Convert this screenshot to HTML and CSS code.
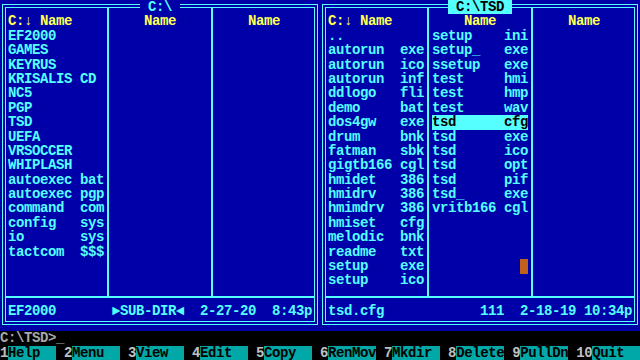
FILE: index.html
```html
<!DOCTYPE html>
<html lang="en">
<head>
  <meta charset="UTF-8">
  <title>Norton Commander - C:\TSD</title>
  <link rel="stylesheet" href="styles.css">
</head>
<body>
  <div class="screen">
    <div class="panels">

      <section class="panel">
        <div class="title"> C:\ </div>
        <div class="frame">
          <div class="inner">
            <div class="cols">
              <div class="col">
                <div class="hdr sort">C:↓ Name</div>
                <ul class="files">
                  <li><span class="nm">EF2000</span></li>
                  <li><span class="nm">GAMES</span></li>
                  <li><span class="nm">KEYRUS</span></li>
                  <li><span class="nm">KRISALIS</span><span class="ex">CD</span></li>
                  <li><span class="nm">NC5</span></li>
                  <li><span class="nm">PGP</span></li>
                  <li><span class="nm">TSD</span></li>
                  <li><span class="nm">UEFA</span></li>
                  <li><span class="nm">VRSOCCER</span></li>
                  <li><span class="nm">WHIPLASH</span></li>
                  <li><span class="nm">autoexec</span><span class="ex">bat</span></li>
                  <li><span class="nm">autoexec</span><span class="ex">pgp</span></li>
                  <li><span class="nm">command</span><span class="ex">com</span></li>
                  <li><span class="nm">config</span><span class="ex">sys</span></li>
                  <li><span class="nm">io</span><span class="ex">sys</span></li>
                  <li><span class="nm">tactcom</span><span class="ex">$$$</span></li>
                </ul>
              </div>
              <div class="col">
                <div class="hdr">Name</div>
              </div>
              <div class="col">
                <div class="hdr">Name</div>
              </div>
            </div>
            <div class="status">EF2000       ►SUB-DIR◄  2-27-20  8:43p</div>
          </div>
        </div>
      </section>

      <section class="panel">
        <div class="title active"> C:\TSD </div>
        <div class="frame">
          <div class="inner">
            <div class="cols">
              <div class="col">
                <div class="hdr sort">C:↓ Name</div>
                <ul class="files">
                  <li><span class="nm">..</span></li>
                  <li><span class="nm">autorun</span><span class="ex">exe</span></li>
                  <li><span class="nm">autorun</span><span class="ex">ico</span></li>
                  <li><span class="nm">autorun</span><span class="ex">inf</span></li>
                  <li><span class="nm">ddlogo</span><span class="ex">fli</span></li>
                  <li><span class="nm">demo</span><span class="ex">bat</span></li>
                  <li><span class="nm">dos4gw</span><span class="ex">exe</span></li>
                  <li><span class="nm">drum</span><span class="ex">bnk</span></li>
                  <li><span class="nm">fatman</span><span class="ex">sbk</span></li>
                  <li><span class="nm">gigtb166</span><span class="ex">cgl</span></li>
                  <li><span class="nm">hmidet</span><span class="ex">386</span></li>
                  <li><span class="nm">hmidrv</span><span class="ex">386</span></li>
                  <li><span class="nm">hmimdrv</span><span class="ex">386</span></li>
                  <li><span class="nm">hmiset</span><span class="ex">cfg</span></li>
                  <li><span class="nm">melodic</span><span class="ex">bnk</span></li>
                  <li><span class="nm">readme</span><span class="ex">txt</span></li>
                  <li><span class="nm">setup</span><span class="ex">exe</span></li>
                  <li><span class="nm">setup</span><span class="ex">ico</span></li>
                </ul>
              </div>
              <div class="col">
                <div class="hdr">Name</div>
                <ul class="files">
                  <li><span class="nm">setup</span><span class="ex">ini</span></li>
                  <li><span class="nm">setup_</span><span class="ex">exe</span></li>
                  <li><span class="nm">ssetup</span><span class="ex">exe</span></li>
                  <li><span class="nm">test</span><span class="ex">hmi</span></li>
                  <li><span class="nm">test</span><span class="ex">hmp</span></li>
                  <li><span class="nm">test</span><span class="ex">wav</span></li>
                  <li class="selected"><span class="nm">tsd</span><span class="ex">cfg</span></li>
                  <li><span class="nm">tsd</span><span class="ex">exe</span></li>
                  <li><span class="nm">tsd</span><span class="ex">ico</span></li>
                  <li><span class="nm">tsd</span><span class="ex">opt</span></li>
                  <li><span class="nm">tsd</span><span class="ex">pif</span></li>
                  <li><span class="nm">tsd_</span><span class="ex">exe</span></li>
                  <li><span class="nm">vritb166</span><span class="ex">cgl</span></li>
                </ul>
              </div>
              <div class="col">
                <div class="hdr">Name</div>
              </div>
            </div>
            <div class="status">tsd.cfg            111  2-18-19 10:34p</div>
          </div>
        </div>
        <div class="mouse"></div>
      </section>

    </div>

    <div class="prompt">C:\TSD&gt;_</div>

    <div class="keybar">
      <div class="key"><span class="num">1</span><span class="lab">Help</span></div>
      <div class="key"><span class="num">2</span><span class="lab">Menu</span></div>
      <div class="key"><span class="num">3</span><span class="lab">View</span></div>
      <div class="key"><span class="num">4</span><span class="lab">Edit</span></div>
      <div class="key"><span class="num">5</span><span class="lab">Copy</span></div>
      <div class="key"><span class="num">6</span><span class="lab">RenMov</span></div>
      <div class="key"><span class="num">7</span><span class="lab">Mkdir</span></div>
      <div class="key"><span class="num">8</span><span class="lab">Delete</span></div>
      <div class="key"><span class="num">9</span><span class="lab">PullDn</span></div>
      <div class="key"><span class="num">10</span><span class="lab">Quit</span></div>
    </div>
  </div>
</body>
</html>
```

FILE: styles.css
```css
/* 80x25 text screen: one cell = 8px x 14.4px */
body {
    margin: 0;
    background: #000;
}

.screen {
    width: 640px;
    height: 360px;
    overflow: hidden;
    background: #000;
    font-family: "Liberation Mono", "DejaVu Sans Mono", monospace;
    font-size: 14px;
    font-weight: bold;
    letter-spacing: -0.4px;
    line-height: 14.4px;
}

.panels {
    display: flex;
    height: 331.2px;
}

.panel {
    position: relative;
    width: 320px;
    height: 100%;
    box-sizing: border-box;
    padding: 4px 2px 6.2px;
    background: #0000a8;
    color: #55ffff;
}

/* double frame */
.frame {
    height: 100%;
    box-sizing: border-box;
    border: 1px solid #55ffff;
    padding: 2px;
}

.inner {
    height: 100%;
    box-sizing: border-box;
    border: 1px solid #55ffff;
    display: flex;
    flex-direction: column;
}

.title {
    position: absolute;
    top: 0;
    left: 0;
    right: 0;
    width: fit-content;
    margin: 0 auto;
    height: 14.4px;
    white-space: pre;
    background: #0000a8;
    color: #55ffff;
}

.title.active {
    background: #55ffff;
    color: #000;
}

.cols {
    flex: 1;
    display: grid;
    grid-template-columns: 103px 104px 1fr;
}

.col {
    box-sizing: border-box;
    padding: 6.4px 0 0 3px;
    border-right: 2px solid #55ffff;
}

.col:first-child {
    padding-left: 2px;
}

.col:last-child {
    border-right: none;
}

.hdr {
    width: 96px;
    height: 14.4px;
    white-space: pre;
    text-align: center;
    color: #ffff55;
}

.hdr.sort {
    text-align: left;
}

.files {
    list-style: none;
    margin: 0;
    padding: 0;
}

.files li {
    display: flex;
    width: 96px;
    height: 14.4px;
    white-space: pre;
}

.nm {
    width: 72px;
}

.selected {
    background: #55ffff;
    color: #000;
}

.status {
    height: 25px;
    box-sizing: border-box;
    border-top: 2px solid #55ffff;
    padding: 6.4px 0 0 2px;
    white-space: pre;
}

.mouse {
    position: absolute;
    left: 200px;
    top: 259.2px;
    width: 8px;
    height: 14.4px;
    background: #c0601c;
}

.prompt {
    height: 14.4px;
    white-space: pre;
    color: #a8a8a8;
}

.keybar {
    display: flex;
    gap: 8px;
    height: 14.4px;
    white-space: pre;
}

.key {
    display: flex;
}

.num {
    color: #c0c0c0;
}

.lab {
    width: 48px;
    background: #00a8a8;
    color: #000;
}
```
